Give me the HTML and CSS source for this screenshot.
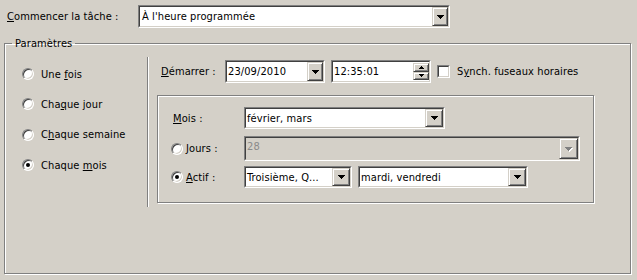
FILE: index.html
```html
<!DOCTYPE html>
<html lang="fr">
<head>
<meta charset="utf-8">
<title>Planification</title>
<link rel="stylesheet" href="styles.css">
</head>
<body>
<div class="start-row">
  <label class="start-label"><u>C</u>ommencer la tâche :</label>
  <div class="sunken combo combo-start">
    <div class="in">
      <span class="val val-list">À l'heure programmée</span>
      <span class="ddbtn"><svg class="arr" width="7" height="4" viewBox="0 0 7 4"><path d="M0 0h7v1H0zM1 1h5v1H1zM2 2h3v1H2zM3 3h1v1H3z"/></svg></span>
    </div>
  </div>
</div>

<fieldset class="params">
  <legend>Paramètres</legend>
  <div class="params-body">
    <div class="freq">
      <div class="opt"><span class="radio"></span><span>Une <u>f</u>ois</span></div>
      <div class="opt"><span class="radio"></span><span>Cha<u>q</u>ue jour</span></div>
      <div class="opt opt-wide"><span class="radio"></span><span>C<u>h</u>aque semaine</span></div>
      <div class="opt"><span class="radio checked"></span><span>Chaque <u>m</u>ois</span></div>
    </div>
    <div class="sep"></div>
    <div class="detail">
      <div class="start-line">
        <span class="dlab"><u>D</u>émarrer :</span>
        <div class="sunken combo combo-date">
          <div class="in">
            <span class="val">23/09/2010</span>
            <span class="ddbtn"><svg class="arr" width="7" height="4" viewBox="0 0 7 4"><path d="M0 0h7v1H0zM1 1h5v1H1zM2 2h3v1H2zM3 3h1v1H3z"/></svg></span>
          </div>
        </div>
        <div class="sunken combo combo-time">
          <div class="in">
            <span class="val">12:35:01</span>
            <span class="spin">
              <span class="spbtn"><svg class="sarr" width="5" height="3" viewBox="0 0 5 3"><path d="M2 0h1v1H2zM1 1h3v1H1zM0 2h5v1H0z"/></svg></span>
              <span class="spbtn"><svg class="sarr" width="5" height="3" viewBox="0 0 5 3"><path d="M0 0h5v1H0zM1 1h3v1H1zM2 2h1v1H2z"/></svg></span>
            </span>
          </div>
        </div>
        <span class="sunken check"><span class="in"></span></span>
        <span class="check-label">S<u>y</u>nch. fuseaux horaires</span>
      </div>

      <div class="month-box">
        <div class="mrow mrow-1">
          <span class="mlab"><span class="mtext"><u>M</u>ois :</span></span>
          <div class="sunken combo combo-mois">
            <div class="in">
              <span class="val">février, mars</span>
              <span class="ddbtn big"><svg class="arr" width="7" height="4" viewBox="0 0 7 4"><path d="M0 0h7v1H0zM1 1h5v1H1zM2 2h3v1H2zM3 3h1v1H3z"/></svg></span>
            </div>
          </div>
        </div>
        <div class="mrow mrow-2">
          <span class="mlab"><span class="radio"></span><span><u>J</u>ours :</span></span>
          <div class="sunken combo combo-jours disabled">
            <div class="in">
              <span class="val val-top">28</span>
              <span class="ddbtn big tall"><svg class="arr dis" width="8" height="5" viewBox="0 0 8 5"><path fill="#fff" d="M1 1h7v1H1zM2 2h5v1H2zM3 3h3v1H3zM4 4h1v1H4z"/><path fill="#808080" d="M0 0h7v1H0zM1 1h5v1H1zM2 2h3v1H2zM3 3h1v1H3z"/></svg></span>
            </div>
          </div>
        </div>
        <div class="mrow mrow-3">
          <span class="mlab"><span class="radio checked"></span><span><u>A</u>ctif :</span></span>
          <div class="sunken combo combo-rank">
            <div class="in">
              <span class="val">Troisième, Q...</span>
              <span class="ddbtn big"><svg class="arr" width="7" height="4" viewBox="0 0 7 4"><path d="M0 0h7v1H0zM1 1h5v1H1zM2 2h3v1H2zM3 3h1v1H3z"/></svg></span>
            </div>
          </div>
          <div class="sunken combo combo-days">
            <div class="in">
              <span class="val">mardi, vendredi</span>
              <span class="ddbtn big"><svg class="arr" width="7" height="4" viewBox="0 0 7 4"><path d="M0 0h7v1H0zM1 1h5v1H1zM2 2h3v1H2zM3 3h1v1H3z"/></svg></span>
            </div>
          </div>
        </div>
      </div>
    </div>
  </div>
</fieldset>
</body>
</html>
```

FILE: styles.css
```css
* { box-sizing: border-box; }

body {
  margin: 0;
  width: 637px;
  height: 280px;
  overflow: hidden;
  background: #d4d0c8;
  color: #000;
  font-family: "DejaVu Sans Condensed", "DejaVu Sans", sans-serif;
  font-size: 11px;
  line-height: 13px;
  letter-spacing: 0.1px;
}

u { text-decoration: underline; text-underline-offset: 1px; }

/* ---------- generic classic controls ---------- */
.sunken {
  display: block;
  border: 1px solid;
  border-color: #808080 #fff #fff #808080;
  background: #fff;
}
.sunken > .in {
  display: flex;
  align-items: center;
  height: 100%;
  border: 1px solid;
  border-color: #404040 #d4d0c8 #d4d0c8 #404040;
}

.combo .val {
  flex: 1;
  padding-left: 1px;
  white-space: nowrap;
  overflow: hidden;
}
.combo .val-list { padding-left: 2px; }

.ddbtn {
  flex: none;
  width: 16px;
  height: 100%;
  display: flex;
  align-items: center;
  justify-content: center;
  background: #d4d0c8;
  border: 1px solid;
  border-color: #d4d0c8 #404040 #404040 #d4d0c8;
  box-shadow: inset 1px 1px 0 #fff, inset -1px -1px 0 #808080;
}
.ddbtn.big { width: 18px; }
.arr { display: block; shape-rendering: crispEdges; fill: #000; }
.arr.dis { margin-left: 1px; margin-top: 1px; }

.radio {
  flex: none;
  position: relative;
  width: 12px;
  height: 12px;
  border-radius: 50%;
  background: #fff;
  border: 1px solid;
  border-color: #808080 #fff #fff #808080;
  box-shadow: inset 1px 1px 0 #404040, inset -1px -1px 0 #d4d0c8;
}
.radio.checked::after {
  content: "";
  position: absolute;
  left: 3px;
  top: 3px;
  width: 4px;
  height: 4px;
  border-radius: 50%;
  background: #000;
}

/* ---------- top row ---------- */
.start-row {
  display: flex;
  align-items: center;
  padding: 5px 0 0 7px;
}
.start-label { width: 131px; padding-bottom: 1px; }
.combo-start { width: 312px; height: 23px; }

/* ---------- group box ---------- */
.params {
  margin: 9px 6px 0 4px;
  padding: 0;
  min-width: 0;
  height: 237px;
  border: 1px solid #808080;
  box-shadow: inset 1px 1px 0 #fff, 1px 1px 0 #fff;
}
.params legend {
  margin-left: 7px;
  padding: 0 3px;
  line-height: 13px;
}

.params-body {
  display: flex;
  align-items: flex-start;
}

.freq {
  width: 142px;
  padding: 9px 0 0 17px;
}
.opt {
  display: flex;
  align-items: center;
  height: 30px;
}
.opt-wide { height: 31px; }
.opt .radio { margin-right: 7px; }

.sep {
  width: 2px;
  height: 150px;
  margin-top: 7px;
  border-left: 1px solid #808080;
  border-right: 1px solid #fff;
}

.detail {
  padding-left: 8px;
}

.start-line {
  display: flex;
  align-items: center;
  margin-top: 10px;
  padding-left: 4px;
}
.dlab { width: 64px; }
.combo-date { width: 100px; height: 23px; }
.combo-time { width: 100px; height: 23px; margin-left: 6px; }

.spin {
  flex: none;
  width: 16px;
  height: 100%;
  display: flex;
  flex-direction: column;
  padding: 1px 0;
}
.spbtn {
  flex: 1;
  display: flex;
  align-items: center;
  justify-content: center;
  background: #d4d0c8;
  border: 1px solid;
  border-color: #d4d0c8 #404040 #404040 #d4d0c8;
  box-shadow: inset 1px 1px 0 #fff, inset -1px -1px 0 #808080;
}
.sarr { display: block; shape-rendering: crispEdges; fill: #000; }

.check {
  width: 13px;
  height: 13px;
  margin-left: 6px;
}
.check-label { margin-left: 7px; }

.month-box {
  width: 437px;
  height: 108px;
  margin-top: 12px;
  border: 1px solid #808080;
  box-shadow: inset 1px 1px 0 #fff, 1px 1px 0 #fff;
  padding-top: 11px;
}

.mrow {
  display: flex;
  align-items: center;
  padding-left: 13px;
}
.mrow-2 { margin-top: 7px; }
.mrow-3 { margin-top: 5px; }
.mlab {
  width: 73px;
  flex: none;
  display: flex;
  align-items: center;
}
.mlab .radio { margin-right: 3px; }
.mtext { padding-left: 2px; }

.combo-mois { width: 201px; height: 22px; }
.combo-jours { width: 336px; height: 25px; }
.combo-rank { width: 108px; height: 22px; }
.combo-days { width: 170px; height: 22px; margin-left: 6px; }

.disabled { background: #d4d0c8; }
.disabled .val { color: #8a8a8a; }
.disabled .in { align-items: stretch; }
.val-top { padding-top: 2px; }
.ddbtn.tall { height: auto; width: 19px; }
```
